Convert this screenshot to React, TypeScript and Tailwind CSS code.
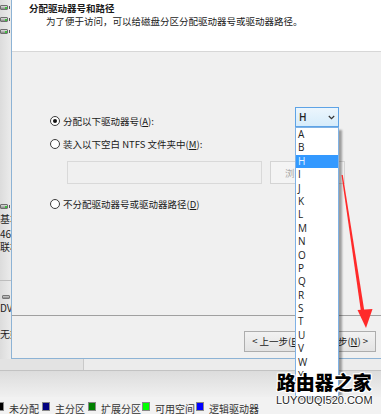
import React from 'react';

const cjk = "font-['Noto_Sans_CJK_SC',sans-serif]";

const letters = ['A', 'B', 'H', 'I', 'J', 'K', 'L', 'M', 'N', 'O', 'P', 'Q', 'R', 'S', 'T', 'U', 'V', 'W', 'Y', 'Z'];

const Radio = ({ checked }: { checked?: boolean }) => (
  <span className="w-[10px] h-[10px] rounded-full border border-[#3c3c3c] bg-white flex items-center justify-center shrink-0">
    {checked && <span className="w-[4px] h-[4px] rounded-full bg-[#111]" />}
  </span>
);

const DiskIcon = () => (
  <div className="flex items-center">
    <div className="w-[8px] h-[5px] rounded-[1px] bg-gradient-to-b from-[#e0e0e0] to-[#8a8a8a] border border-[#6e6e6e] relative">
      <span className="absolute right-0 top-[1px] w-[2px] h-[2px] bg-[#3fbf3f]" />
    </div>
    <span className="ml-[1px] w-[1px] h-[3px] bg-[#555]" />
  </div>
);

const LeftStrip = () => (
  <div className={`w-[11px] shrink-0 bg-gradient-to-r from-[#dcdcdc] to-[#ebebeb] flex flex-col overflow-hidden text-[10px] leading-[10px] text-[#222] ${cjk}`}>
    <div className="mt-[5px]"><DiskIcon /></div>
    <div className="mt-[7px]"><DiskIcon /></div>
    <div className="mt-[7px]"><DiskIcon /></div>
    <div className="mt-[170px]"><DiskIcon /></div>
    <div className="mt-[5px] whitespace-nowrap">基本</div>
    <div className="mt-[5px] whitespace-nowrap">46</div>
    <div className="mt-[3px] whitespace-nowrap">联机</div>
    <div className="mt-[28px] h-px bg-[#bdbdbd]" />
    <div className="mt-[9px] ml-[2px] w-[8px] h-[9px] flex flex-col justify-end">
      <div className="h-[4px] bg-gradient-to-b from-[#cfcfcf] to-[#8a8a8a] border border-[#777] rounded-[1px]" />
    </div>
    <div className="mt-[4px] whitespace-nowrap">DVD</div>
    <div className="mt-[16px] whitespace-nowrap">无媒体</div>
  </div>
);

const Dialog = () => (
  <div className={`flex-1 flex flex-col border-l border-b border-[#8db3d5] bg-[#f0f0f0] text-[#1a1a1a] ${cjk}`}>
    <div className="h-[52px] bg-white border-b border-[#d7d7d7] pl-[17px] pt-[2px]">
      <div className="text-[9.5px] leading-[12px] font-bold">分配驱动器号和路径</div>
      <div className="text-[9.5px] leading-[12px] pl-[17px] mt-px">为了便于访问，可以给磁盘分区分配驱动器号或驱动器路径。</div>
    </div>

    <div className="h-[264px] flex flex-col pl-[38px] border-b border-[#a0a0a0] text-[9.5px] leading-[12px]">
      <div className="mt-[55px] flex items-start h-[20px]">
        <div className="mt-[8px] flex items-center gap-[3px]">
          <Radio checked />
          <span>分配以下驱动器号(<span className="underline">A</span>):</span>
        </div>
        <div className="ml-auto mr-[42px] w-[44px] h-[20px] border border-[#5ea3e6] bg-gradient-to-b from-[#ecf6fd] to-[#d6ecfb] flex items-center pl-[3px] pr-[3px]">
          <span className="font-['Open_Sans',sans-serif] text-[10px] font-semibold text-[#222]">H</span>
          <svg className="ml-auto" width="7" height="5" viewBox="0 0 7 5">
            <path d="M0.8 1 L3.5 3.6 L6.2 1" fill="none" stroke="#333" strokeWidth="1.2" />
          </svg>
        </div>
      </div>
      <div className="mt-[11px] h-[12px] flex items-center gap-[3px]">
        <Radio />
        <span>装入以下空白 NTFS 文件夹中(<span className="underline">M</span>):</span>
      </div>
      <div className="mt-[11px] h-[23px] flex">
        <div className="ml-[17px] w-[195px] h-[23px] border border-[#d9d9d9] bg-[#f0f0f0]" />
        <div className="ml-[8px] w-[75px] h-[23px] border border-[#d4d4d4] bg-[#f4f4f4] text-[#a8a8a8] flex items-center pl-[14px]">浏览(R)...</div>
      </div>
      <div className="mt-[14px] h-[12px] flex items-center gap-[3px]">
        <Radio />
        <span>不分配驱动器号或驱动器路径(<span className="underline">D</span>)</span>
      </div>
    </div>

    <div className="flex-1 flex justify-end items-start pt-[15px] pr-[5px] gap-[2px] text-[9.5px]">
      <div className="w-[65px] h-[21px] border border-[#adadad] bg-gradient-to-b from-[#f2f2f2] to-[#e3e3e3] flex items-center justify-center">
        &lt; 上一步(<span className="underline">B</span>)
      </div>
      <div className="w-[65px] h-[21px] border border-[#adadad] bg-gradient-to-b from-[#f2f2f2] to-[#e3e3e3] flex items-center justify-center">
        下一步(<span className="underline">N</span>) &gt;
      </div>
    </div>
  </div>
);

const legend = [
  { color: 'bg-black', label: '未分配', w: 'w-[46px]' },
  { color: 'bg-[#000080]', label: '主分区', w: 'w-[46px]' },
  { color: 'bg-[#008000]', label: '扩展分区', w: 'w-[54px]' },
  { color: 'bg-[#00ff00]', label: '可用空间', w: 'w-[54px]' },
  { color: 'bg-[#0000ff]', label: '逻辑驱动器', w: 'w-[70px]' },
];

const Bottom = () => (
  <div className="flex-1 flex flex-col">
    <div className="h-[12px] flex bg-[#e8e8e8] border-b border-[#c2c2c2]">
      <div className="w-[84px] border-r border-[#c9c9c9] bg-[#e3e3e3]" />
      <div className="flex-1 bg-[#ececec]" />
    </div>
    <div className="h-[26px] bg-gradient-to-b from-[#dcdcdc] to-[#f0f0f0]" />
    <div className={`flex-1 flex items-start pt-[5px] bg-[#f2f2f2] text-[10px] leading-[11px] text-[#333] overflow-hidden ${cjk}`}>
      {legend.map((l, i) => (
        <div key={l.label} className={`flex items-start shrink-0 ${l.w} ${i === 0 ? '-ml-[4px]' : ''}`}>
          <span className={`w-[8px] h-[9px] border border-[#888] ${l.color}`} />
          <span className="ml-[5px] mt-[1px] whitespace-nowrap">{l.label}</span>
        </div>
      ))}
    </div>
  </div>
);

export default function App() {
  return (
    <div className="relative w-[381px] h-[414px] overflow-hidden bg-[#f0f0f0] flex flex-col">
      <div className="h-[365px] flex">
        <LeftStrip />
        <Dialog />
      </div>
      <Bottom />

      {/* open drop-down list */}
      <div className="absolute left-[295px] top-[127px] w-[44px] bg-white border border-[#7fb2e5] shadow-[3px_3px_2px_rgba(0,0,0,0.35)] font-['Open_Sans',sans-serif] text-[10px] font-medium text-[#222]">
        {letters.map((l) => (
          <div key={l} className={`h-[13.4px] leading-[13.4px] pl-[2px] ${l === 'H' ? 'bg-[#3399ff] text-[#e8f3ff]' : ''}`}>{l}</div>
        ))}
      </div>

      {/* red arrow */}
      <svg className="absolute left-0 top-0 pointer-events-none" width="381" height="414" viewBox="0 0 381 414">
        <polygon points="341.5,175 342.8,175 364.5,312 361,312" fill="#ff2a2a" />
        <polygon points="357.5,310 372.5,309 366,328" fill="#ff2a2a" />
      </svg>

      {/* watermark */}
      <div className="absolute left-[276px] top-[370px] flex flex-col items-center pointer-events-none">
        <div className={`text-[19px] leading-[24px] font-black text-black ${cjk} [text-shadow:1px_0_0_#fff,-1px_0_0_#fff,0_1px_0_#fff,0_-1px_0_#fff,1px_1px_0_#fff,-1px_-1px_0_#fff,1px_-1px_0_#fff,-1px_1px_0_#fff]`}>
          路由器之家
        </div>
        <div className="text-[11px] leading-[13px] text-[#2a2a2a] font-['Liberation_Sans',sans-serif] [text-shadow:1px_0_0_#fff,-1px_0_0_#fff,0_1px_0_#fff,0_-1px_0_#fff]">
          LUYOUQI520.COM
        </div>
      </div>
    </div>
  );
}
